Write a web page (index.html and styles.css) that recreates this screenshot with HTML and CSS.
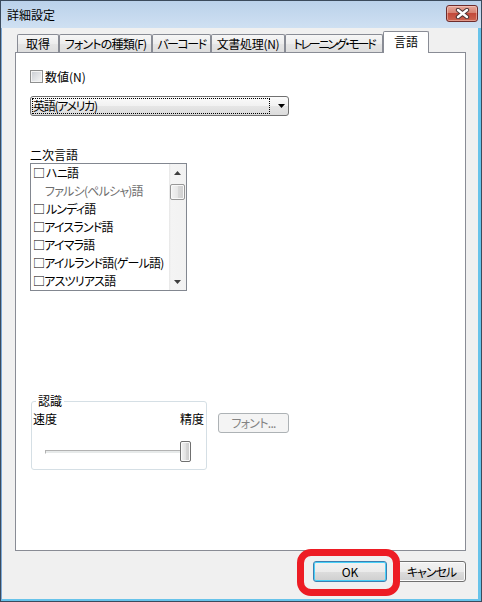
FILE: index.html
```html
<!DOCTYPE html>
<html lang="ja">
<head>
<meta charset="utf-8">
<title>詳細設定</title>
<link rel="stylesheet" href="styles.css">
</head>
<body>
<div class="window">
  <div class="titlebar">
    <span class="title">詳細設定</span>
    <div class="close">
      <svg width="15" height="11" viewBox="0 0 15 11">
        <path d="M3 2 L12 9 M12 2 L3 9" stroke="#4a3434" stroke-width="4.4" stroke-linecap="round"/>
        <path d="M3 2 L12 9 M12 2 L3 9" stroke="#ffffff" stroke-width="2.4" stroke-linecap="round"/>
      </svg>
    </div>
  </div>
  <div class="client">
    <div class="tabs">
      <div class="tab t1">取得</div>
      <div class="tab t2">フォントの種類(F)</div>
      <div class="tab t3">バーコード</div>
      <div class="tab t4">文書処理(N)</div>
      <div class="tab t5">トレーニング・モード</div>
      <div class="tab sel t6">言語</div>
    </div>
    <div class="panel">
      <div class="check">
        <span class="cbox"></span>
        <span class="check-label">数値(N)</span>
      </div>
      <div class="combo">
        <span class="combo-text">英語(アメリカ)</span>
        <span class="combo-arrow">
          <svg width="7" height="4" viewBox="0 0 7 4"><path d="M0 0 H7 L3.5 4 Z" fill="#000"/></svg>
        </span>
      </div>
      <div class="label">二次言語</div>
      <div class="listbox">
        <ul class="items">
          <li>□ ハニ語</li>
          <li class="dim">ファルシ(ペルシャ)語</li>
          <li>□ ルンディ語</li>
          <li>□アイスランド語</li>
          <li>□アイマラ語</li>
          <li>□アイルランド語(ゲール語)</li>
          <li>□アスツリアス語</li>
        </ul>
        <div class="vscroll">
          <div class="sb-btn">
            <svg width="7" height="4" viewBox="0 0 7 4"><path d="M0 4 H7 L3.5 0 Z" fill="#3f3f3f"/></svg>
          </div>
          <div class="thumb"></div>
          <div class="sb-space"></div>
          <div class="sb-btn">
            <svg width="7" height="4" viewBox="0 0 7 4"><path d="M0 0 H7 L3.5 4 Z" fill="#3f3f3f"/></svg>
          </div>
        </div>
      </div>
      <div class="bottom-row">
        <fieldset class="group">
          <legend>認識</legend>
          <div class="speed-row"><span>速度</span><span>精度</span></div>
          <div class="slider">
            <div class="track"></div>
            <div class="knob"></div>
          </div>
        </fieldset>
        <button class="btn disabled" disabled>フォント...</button>
      </div>
    </div>
    <div class="buttons">
      <div class="ok-wrap">
        <button class="btn ok">OK</button>
        <div class="highlight"></div>
      </div>
      <button class="btn cancel">キャンセル</button>
    </div>
  </div>
</div>
</body>
</html>
```
FILE: styles.css
```css
* { box-sizing: border-box; }
html, body { margin: 0; padding: 0; }
body {
  width: 482px;
  height: 602px;
  overflow: hidden;
  background: #ffffff;
  font-family: "Noto Sans CJK JP", "Noto Sans", sans-serif;
  font-size: 12px;
  color: #000;
  font-feature-settings: "palt";
}

.window {
  width: 482px;
  height: 602px;
  border: 1px solid #3b4a5c;
  display: flex;
  flex-direction: column;
  background: #c9dbee;
}

.titlebar {
  height: 27px;
  flex: none;
  display: flex;
  align-items: flex-start;
  justify-content: space-between;
  padding: 0 3px 0 6px;
  background: linear-gradient(#bad1ea, #cfe0f2);
}
.title { line-height: 27px; }

.close {
  margin-top: 4px;
  width: 32px;
  height: 17px;
  border: 1px solid #6e2c2c;
  border-radius: 3px;
  background: linear-gradient(#e6a79a, #d68272 45%, #c24a3b 50%, #cc6450 100%);
  box-shadow: inset 0 0 0 1px rgba(255, 220, 210, 0.45);
  display: flex;
  align-items: center;
  justify-content: center;
}

.client {
  flex: 1;
  display: flex;
  flex-direction: column;
  padding-left: 13px;
  background: #f0f0f0;
  border-left: 1px solid #7ca9d8;
  border-right: 3px solid #67c3ea;
  border-bottom: 2px solid #67c3ea;
}

/* tabs */
.tabs {
  display: flex;
  align-items: flex-end;
  height: 21px;
  margin: 3px 0 0 2px;
  position: relative;
  z-index: 1;
}
.tab {
  height: 18px;
  border: 1px solid #898c95;
  border-bottom: none;
  border-radius: 2px 2px 0 0;
  background: linear-gradient(#f6f6f6, #ededed 50%, #e5e5e5 51%, #dedede);
  text-align: center;
  line-height: 17px;
  white-space: nowrap;
  overflow: hidden;
}
.tab.sel {
  height: 22px;
  margin-bottom: -1px;
  background: #ffffff;
  line-height: 20px;
}
.t1 { width: 42px; }
.t2 { width: 93px; letter-spacing: -0.8px; }
.t3 { width: 59px; letter-spacing: -1.5px; }
.t4 { width: 74px; letter-spacing: -0.3px; }
.t5 { width: 98px; letter-spacing: -2.2px; }
.t6 { width: 46px; }

/* panel */
.panel {
  width: 451px;
  height: 499px;
  flex: none;
  border: 1px solid #898c95;
  background: #ffffff;
  padding-left: 14px;
  display: flex;
  flex-direction: column;
  align-items: flex-start;
}

.check {
  margin-top: 17px;
  height: 13px;
  display: flex;
  align-items: center;
}
.cbox {
  width: 13px;
  height: 13px;
  border: 1px solid #8e8f8f;
  background: linear-gradient(135deg, #c9cdd3, #eeeff0 80%);
  box-shadow: inset 0 0 0 1px #f4f4f4;
  margin-right: 2px;
}
.check-label { line-height: 13px; }

.combo {
  margin-top: 13px;
  width: 259px;
  height: 20px;
  border: 1px solid #707070;
  border-radius: 3px;
  padding: 1px;
  display: flex;
  align-items: center;
  background: linear-gradient(#fbfbfb, #f1f1f1 50%, #e6e6e6 51%, #dcdcdc);
}
.combo-text {
  width: 238px;
  height: 16px;
  border: 1px dotted #000;
  line-height: 14px;
  white-space: nowrap;
  letter-spacing: -1.3px;
}
.combo-arrow {
  flex: 1;
  display: flex;
  justify-content: center;
  padding-left: 5px;
}

.label {
  margin-top: 31px;
  line-height: 16px;
}

.listbox {
  width: 157px;
  height: 128px;
  border: 1px solid #828790;
  background: #ffffff;
  display: flex;
}
.items {
  flex: 1;
  list-style: none;
  margin: 0;
  padding: 0 0 0 2px;
  overflow: hidden;
  letter-spacing: -0.8px;
}
.items li {
  height: 18px;
  line-height: 18px;
  white-space: nowrap;
}
.items li.dim {
  color: #6d6d6d;
  padding-left: 12px;
}
.vscroll {
  width: 17px;
  flex: none;
  display: flex;
  flex-direction: column;
  background: linear-gradient(90deg, #e6e6e6, #f4f4f4 2px, #f2f2f2);
}
.sb-btn {
  height: 17px;
  flex: none;
  display: flex;
  align-items: center;
  justify-content: center;
}
.thumb {
  margin: 3px 0 0 1px;
  width: 15px;
  height: 16px;
  flex: none;
  border: 1px solid #979797;
  border-radius: 2px;
  background: linear-gradient(90deg, #f3f3f3, #e6e6e6 50%, #d9d9d9 51%, #cfcfcf);
  box-shadow: inset 0 0 0 1px #f8f8f8;
}
.sb-space { flex: 1; }

/* recognition group */
.bottom-row {
  margin: 102px 0 0 1px;
  display: flex;
  align-items: flex-start;
}
.group {
  width: 176px;
  min-width: 0;
  margin: 0;
  padding: 2px 0 7px 0;
  border: 1px solid #d5dfe5;
  border-radius: 3px;
}
.group legend {
  margin-left: 4px;
  padding: 0 2px;
  line-height: 16px;
}
.speed-row {
  display: flex;
  justify-content: space-between;
  line-height: 16px;
  padding: 0 2px 0 1px;
}
.slider {
  margin-top: 14px;
  height: 21px;
  display: flex;
  align-items: center;
  padding-left: 13px;
}
.track {
  width: 142px;
  height: 4px;
  border: 1px solid #b2b2b2;
  border-right-color: #e2e2e2;
  border-bottom-color: #ffffff;
  background: #e7eaea;
}
.knob {
  width: 11px;
  height: 21px;
  margin-left: -7px;
  border: 1px solid #707070;
  border-radius: 2px;
  background: linear-gradient(90deg, #f2f2f2, #e3e3e3 50%, #d6d6d6 51%, #cccccc);
  box-shadow: inset 0 0 0 1px #fafafa;
}

/* buttons */
.btn {
  height: 21px;
  margin: 0;
  padding: 0;
  font-family: "Noto Sans CJK JP", "Noto Sans", sans-serif;
  font-size: 12px;
  font-feature-settings: "palt";
  color: #000;
  border: 1px solid #707070;
  border-radius: 3px;
  background: linear-gradient(#f2f2f2, #ebebeb 50%, #dddddd 51%, #cfcfcf);
  box-shadow: inset 0 0 0 1px #fcfcfc;
  line-height: 18px;
}
.btn.disabled {
  width: 71px;
  height: 20px;
  margin: 20px 0 0 11px;
  color: #838383;
  border-color: #adb2b5;
  background: #f4f4f4;
  box-shadow: none;
  letter-spacing: -0.7px;
}
.buttons {
  margin-top: 10px;
  width: 451px;
  display: flex;
  justify-content: flex-end;
  gap: 10px;
}
.ok-wrap {
  position: relative;
  display: flex;
}
.btn.ok {
  width: 74px;
  border-color: #3c7fb1;
  box-shadow: inset 0 0 0 1px #48d0f8;
}
.btn.cancel { width: 69px; letter-spacing: -1px; }
.highlight {
  position: absolute;
  left: -16px;
  top: -12px;
  width: 103px;
  height: 47px;
  border: 7px solid #ed1c24;
  border-radius: 14px;
  pointer-events: none;
}
```
